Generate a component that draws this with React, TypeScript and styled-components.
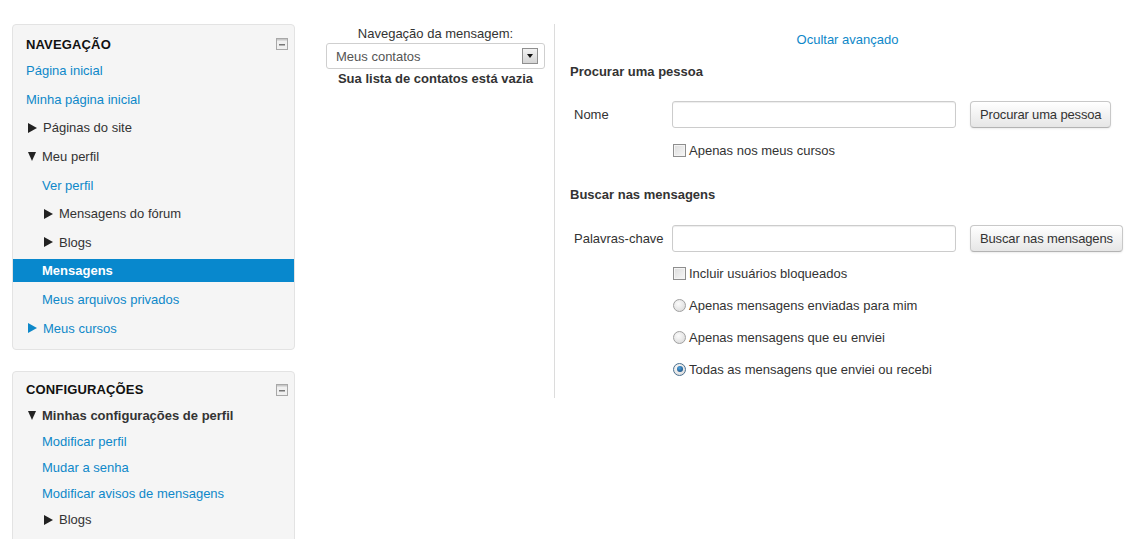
import styled, { createGlobalStyle, css } from "styled-components";

const GlobalStyle = createGlobalStyle`
  html, body {
    margin: 0;
    padding: 0;
    overflow: hidden;
    background: #fff;
  }
  body {
    font-family: "Liberation Sans", Arial, sans-serif;
    font-size: 13px;
    color: #333;
  }
`;

const Page = styled.div`
  display: flex;
  align-items: flex-start;
  padding: 24px 0 0 12px;
`;

const LeftColumn = styled.div`
  width: 283px;
  display: flex;
  flex-direction: column;
  gap: 21px;
`;

const Block = styled.div<{ $top: number; $bottom: number }>`
  box-sizing: border-box;
  width: 100%;
  background: #f5f5f5;
  border: 1px solid #e3e3e3;
  border-radius: 4px;
  padding: ${(p) => p.$top}px 0 ${(p) => p.$bottom}px;
`;

const BlockHeader = styled.div<{ $gap: number }>`
  display: flex;
  align-items: center;
  justify-content: space-between;
  padding: 0 6px 0 13px;
  height: 20px;
  margin-bottom: ${(p) => p.$gap}px;

  h2 {
    margin: 0;
    font-size: 13px;
    font-weight: bold;
    color: #111;
    letter-spacing: 0.15px;
  }
`;

const NavList = styled.ul`
  list-style: none;
  margin: 0;
  padding: 0;
`;

type Kind = "link" | "text" | "bold" | "active";

const NavItem = styled.li<{ $height: number }>`
  box-sizing: border-box;
  height: ${(p) => p.$height}px;
  display: flex;
  align-items: center;
`;

const NavLabel = styled.div<{ $level: number; $kind: Kind; $arrow: boolean }>`
  flex: 1;
  display: flex;
  align-items: center;
  height: 23px;
  padding-left: ${(p) => 13 + p.$level * 16 + (p.$arrow ? 2 : 0)}px;
  color: ${(p) => (p.$kind === "link" ? "#0e88c9" : "#333")};
  font-weight: ${(p) => (p.$kind === "bold" || p.$kind === "active" ? "bold" : "normal")};
  white-space: nowrap;
  ${(p) =>
    p.$kind === "active" &&
    css`
      background: #0888cd;
      color: #fff;
    `}
`;

const Arrow = styled.span<{ $dir: "right" | "down"; $blue?: boolean }>`
  display: inline-block;
  width: 0;
  height: 0;
  margin-right: 7px;
  ${(p) =>
    p.$dir === "right"
      ? css`
          border-top: 5px solid transparent;
          border-bottom: 5px solid transparent;
          border-left: 9px solid ${p.$blue ? "#0e88c9" : "#222"};
          margin-right: 6px;
        `
      : css`
          border-left: 4.5px solid transparent;
          border-right: 4.5px solid transparent;
          border-top: 9px solid #222;
          margin-right: 6px;
        `}
`;

const CollapseIcon = () => (
  <svg width="12" height="12" viewBox="0 0 12 12">
    <rect x="0.5" y="0.5" width="11" height="11" fill="#f0f0f0" stroke="#a8a8a8" />
    <rect x="1" y="1" width="10" height="1.5" fill="#c8c8c8" />
    <rect x="3" y="6" width="6" height="1.5" fill="#777" />
  </svg>
);

type NavEntry = {
  label: string;
  level: number;
  kind: Kind;
  arrow?: "right" | "down";
  blueArrow?: boolean;
};

const navigation: NavEntry[] = [
  { label: "Página inicial", level: 0, kind: "link" },
  { label: "Minha página inicial", level: 0, kind: "link" },
  { label: "Páginas do site", level: 0, kind: "text", arrow: "right" },
  { label: "Meu perfil", level: 0, kind: "text", arrow: "down" },
  { label: "Ver perfil", level: 1, kind: "link" },
  { label: "Mensagens do fórum", level: 1, kind: "text", arrow: "right" },
  { label: "Blogs", level: 1, kind: "text", arrow: "right" },
  { label: "Mensagens", level: 1, kind: "active" },
  { label: "Meus arquivos privados", level: 1, kind: "link" },
  { label: "Meus cursos", level: 0, kind: "link", arrow: "right", blueArrow: true },
];

const settings: NavEntry[] = [
  { label: "Minhas configurações de perfil", level: 0, kind: "bold", arrow: "down" },
  { label: "Modificar perfil", level: 1, kind: "link" },
  { label: "Mudar a senha", level: 1, kind: "link" },
  { label: "Modificar avisos de mensagens", level: 1, kind: "link" },
  { label: "Blogs", level: 1, kind: "text", arrow: "right" },
];

const NavBlock = ({
  title,
  items,
  rowHeight,
  top,
  headerGap,
  bottom,
}: {
  title: string;
  items: NavEntry[];
  rowHeight: number;
  top: number;
  headerGap: number;
  bottom: number;
}) => (
  <Block $top={top} $bottom={bottom}>
    <BlockHeader $gap={headerGap}>
      <h2>{title}</h2>
      <CollapseIcon />
    </BlockHeader>
    <NavList>
      {items.map((item, i) => (
        <NavItem key={i} $height={rowHeight}>
          <NavLabel $level={item.level} $kind={item.kind} $arrow={!!item.arrow}>
            {item.arrow && <Arrow $dir={item.arrow} $blue={item.blueArrow} />}
            {item.label}
          </NavLabel>
        </NavItem>
      ))}
    </NavList>
  </Block>
);

const MiddleColumn = styled.div`
  box-sizing: border-box;
  width: 259px;
  padding: 0 9px 0 31px;
  text-align: center;
`;

const Caption = styled.div`
  line-height: 18px;
  padding-top: 1px;
  color: #333;
`;

const SelectBox = styled.div`
  box-sizing: border-box;
  height: 26px;
  display: flex;
  align-items: center;
  justify-content: space-between;
  border: 1px solid #cfcfcf;
  border-radius: 3px;
  background: #fff;
  padding: 0 6px 0 9px;
  color: #555;
  text-align: left;
`;

const SelectButton = styled.span`
  box-sizing: border-box;
  width: 16px;
  height: 16px;
  display: flex;
  align-items: center;
  justify-content: center;
  border: 1px solid #8f8f8f;
  background: linear-gradient(#f2f2f2, #d4d4d4);

  &::after {
    content: "";
    border-left: 3.5px solid transparent;
    border-right: 3.5px solid transparent;
    border-top: 4px solid #111;
  }
`;

const EmptyNote = styled.div`
  font-weight: bold;
  line-height: 20px;
  color: #333;
`;

const RightColumn = styled.div`
  box-sizing: border-box;
  flex: 1;
  border-left: 1px solid #dcdcdc;
  padding: 0 0 19px 15px;
  display: flex;
  flex-direction: column;
`;

const ToggleLink = styled.div`
  line-height: 32px;
  text-align: center;
  color: #0e88c9;
  padding-right: 11px;
`;

const SectionTitle = styled.div<{ $top: number }>`
  margin-top: ${(p) => p.$top}px;
  line-height: 20px;
  font-weight: bold;
  color: #333;
`;

const FieldRow = styled.div<{ $top: number }>`
  margin-top: ${(p) => p.$top}px;
  display: flex;
  align-items: center;
  padding-left: 4px;
`;

const FieldLabel = styled.label`
  width: 98px;
  color: #333;
`;

const TextInput = styled.input`
  box-sizing: border-box;
  width: 284px;
  height: 27px;
  border: 1px solid #cccccc;
  border-radius: 3px;
  box-shadow: inset 0 1px 1px rgba(0, 0, 0, 0.075);
  margin: 0;
  padding: 4px 6px;
  font: inherit;
`;

const Button = styled.button`
  box-sizing: border-box;
  height: 27px;
  margin-left: 14px;
  padding: 0 9px;
  border: 1px solid #c8c8c8;
  border-bottom-color: #b3b3b3;
  border-radius: 4px;
  background: linear-gradient(#ffffff, #e6e6e6);
  box-shadow: 0 1px 2px rgba(0, 0, 0, 0.08);
  font-family: inherit;
  font-size: 13px;
  color: #333;
  letter-spacing: -0.15px;
`;

const OptionRow = styled.div<{ $top: number }>`
  margin-top: ${(p) => p.$top}px;
  margin-left: 103px;
  height: 20px;
  display: flex;
  align-items: center;
  gap: 3px;
  color: #333;
`;

const CheckBox = styled.span`
  box-sizing: border-box;
  width: 13px;
  height: 13px;
  border: 1px solid #8e8e8e;
  background: linear-gradient(135deg, #dcdcdc, #f7f7f7);
  box-shadow: inset 0 0 0 1px #f4f4f4;
`;

const Radio = styled.span<{ $checked?: boolean }>`
  box-sizing: border-box;
  width: 13px;
  height: 13px;
  border-radius: 50%;
  border: 1px solid ${(p) => (p.$checked ? "#4a6f8e" : "#a0a0a0")};
  background: radial-gradient(circle at 40% 35%, #fbfbfb, #d6d6d6);
  display: flex;
  align-items: center;
  justify-content: center;

  ${(p) =>
    p.$checked &&
    css`
      &::after {
        content: "";
        width: 6px;
        height: 6px;
        border-radius: 50%;
        background: radial-gradient(circle at 40% 35%, #4fa3e0, #0d3e6e);
      }
    `}
`;

export default function App() {
  return (
    <>
      <GlobalStyle />
      <Page>
        <LeftColumn>
          <NavBlock
            title="NAVEGAÇÃO"
            items={navigation}
            rowHeight={28.65}
            top={9}
            headerGap={2.2}
            bottom={6.3}
          />
          <NavBlock
            title="CONFIGURAÇÕES"
            items={settings}
            rowHeight={26}
            top={8}
            headerGap={3}
            bottom={20}
          />
        </LeftColumn>

        <MiddleColumn>
          <Caption>Navegação da mensagem:</Caption>
          <SelectBox>
            <span>Meus contatos</span>
            <SelectButton />
          </SelectBox>
          <EmptyNote>Sua lista de contatos está vazia</EmptyNote>
        </MiddleColumn>

        <RightColumn>
          <ToggleLink>Ocultar avançado</ToggleLink>

          <SectionTitle $top={6}>Procurar uma pessoa</SectionTitle>
          <FieldRow $top={19}>
            <FieldLabel>Nome</FieldLabel>
            <TextInput type="text" />
            <Button>Procurar uma pessoa</Button>
          </FieldRow>
          <OptionRow $top={12}>
            <CheckBox />
            Apenas nos meus cursos
          </OptionRow>

          <SectionTitle $top={25}>Buscar nas mensagens</SectionTitle>
          <FieldRow $top={20}>
            <FieldLabel>Palavras-chave</FieldLabel>
            <TextInput type="text" />
            <Button>Buscar nas mensagens</Button>
          </FieldRow>
          <OptionRow $top={11}>
            <CheckBox />
            Incluir usuários bloqueados
          </OptionRow>
          <OptionRow $top={12}>
            <Radio />
            Apenas mensagens enviadas para mim
          </OptionRow>
          <OptionRow $top={12}>
            <Radio />
            Apenas mensagens que eu enviei
          </OptionRow>
          <OptionRow $top={12}>
            <Radio $checked />
            Todas as mensagens que enviei ou recebi
          </OptionRow>
        </RightColumn>
      </Page>
    </>
  );
}
